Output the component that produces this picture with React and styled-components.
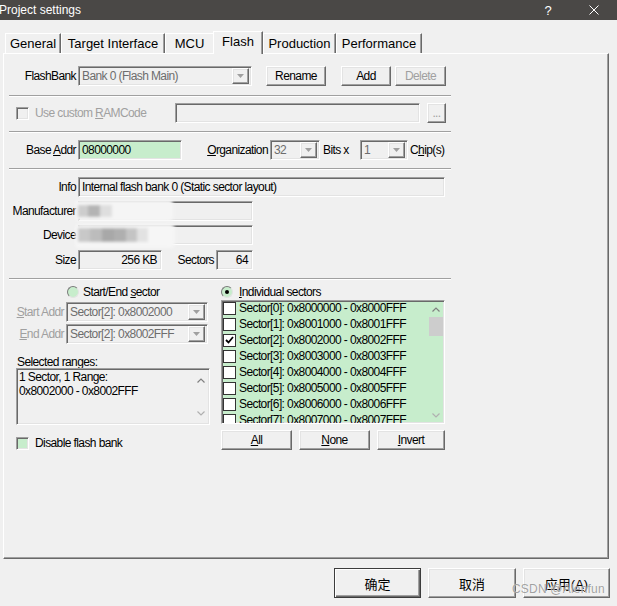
import React from 'react';
import styled, { createGlobalStyle, css } from 'styled-components';

const GREEN = '#c7edcc';
const FACE = '#f0f0f0';
const UI = `"Liberation Sans", Arial, sans-serif`;
const WIDE = `"Liberation Sans", Arial, sans-serif`;
const CJK = `"Liberation Sans", "Noto Sans CJK SC", sans-serif`;

const GlobalStyle = createGlobalStyle`
  * { box-sizing: border-box; }
  html, body { margin: 0; padding: 0; background: ${FACE}; }
  body {
    font-family: ${UI};
    font-size: 12px;
    letter-spacing: -0.6px;
    color: #000;
    overflow: hidden;
  }
`;

const sunken = css`
  border: 1px solid;
  border-color: #a0a0a0 #ffffff #ffffff #a0a0a0;
  box-shadow: inset 1px 1px 0 #696969, inset -1px -1px 0 #e3e3e3;
`;

const raised = css`
  border: 1px solid;
  border-color: #ffffff #696969 #696969 #ffffff;
  box-shadow: inset -1px -1px 0 #a0a0a0, inset 1px 1px 0 #e3e3e3;
`;

const Window = styled.div`
  position: relative;
  width: 617px;
  height: 606px;
  display: flex;
  flex-direction: column;
  background: ${FACE};
`;

const TitleBar = styled.div`
  height: 20px;
  flex-shrink: 0;
  display: flex;
  align-items: center;
  background: #4a4846;
  color: #fff;
  font-family: ${WIDE};
  font-size: 12px;
  letter-spacing: 0;
`;

const Title = styled.div`
  flex: 1;
  margin-left: -1px;
`;

const TitleButton = styled.div`
  width: 46px;
  height: 20px;
  display: flex;
  align-items: center;
  justify-content: center;
  font-size: 13px;
`;

const TabStrip = styled.div`
  display: flex;
  align-items: flex-end;
  height: 23px;
  margin: 11px 0 -1px;
  padding-left: 5px;
  position: relative;
  z-index: 1;
`;

const Tab = styled.div`
  width: ${p => p.$w}px;
  height: ${p => (p.$active ? 23 : 20)}px;
  margin-bottom: ${p => (p.$active ? 0 : 1)}px;
  padding-bottom: ${p => (p.$active ? 4 : 0)}px;
  display: flex;
  align-items: center;
  justify-content: center;
  background: ${FACE};
  border-top: 1px solid #fff;
  border-left: 1px solid #fff;
  border-right: ${p => (p.$hideRight ? 'none' : '1px solid #696969')};
  box-shadow: ${p => (p.$hideRight ? 'none' : 'inset -1px 0 0 #a0a0a0')};
  font-family: ${WIDE};
  font-size: 13px;
  letter-spacing: 0;
  white-space: nowrap;
`;

const Panel = styled.div`
  position: relative;
  width: 606px;
  height: 506px;
  flex-shrink: 0;
  margin-left: 3px;
  padding: 12px 0 0 5px;
  border: 1px solid;
  border-color: #fff #696969 #696969 #fff;
  box-shadow: inset -1px -1px 0 #a0a0a0;
`;

const Section = styled.div`
  width: 442px;
`;

const Row = styled.div`
  display: flex;
  align-items: center;
  height: 20px;
  margin-top: ${p => p.$mt || 0}px;
  padding-right: ${p => p.$pr || 0}px;
  white-space: nowrap;
`;

const Separator = styled.div`
  height: 2px;
  margin-top: ${p => p.$mt || 0}px;
  border-top: 1px solid #a0a0a0;
  border-bottom: 1px solid #fff;
`;

const Label = styled.span`
  flex-shrink: 0;
  width: ${p => (p.$w ?? 69)}px;
  padding: 0 2px 0 ${p => p.$pl || 0}px;
  text-align: ${p => (p.$left ? 'left' : 'right')};
  white-space: nowrap;
  color: ${p => (p.$dim ? '#a0a0a0' : '#000')};
`;

const Text = styled.span`
  margin-left: ${p => p.$ml || 0}px;
  color: ${p => (p.$dim ? '#a0a0a0' : '#000')};
  white-space: nowrap;
`;

const Field = styled.div`
  ${sunken};
  flex-shrink: 0;
  width: ${p => p.$w}px;
  height: 20px;
  margin-left: ${p => (p.$auto ? 'auto' : `${p.$ml || 0}px`)};
  display: flex;
  align-items: center;
  justify-content: ${p => (p.$right ? 'flex-end' : 'flex-start')};
  padding: 0 ${p => (p.$right ? 4 : 2)}px 0 3px;
  background: ${p => p.$bg || FACE};
  white-space: nowrap;
  overflow: hidden;
`;

const ComboText = styled.span`
  flex: 1;
  color: #6d6d6d;
  overflow: hidden;
  white-space: nowrap;
`;

const DropButton = styled.span`
  ${raised};
  flex-shrink: 0;
  width: 17px;
  height: 16px;
  display: flex;
  align-items: center;
  justify-content: center;
  background: ${FACE};
`;

const Button = styled.button`
  ${raised};
  flex-shrink: 0;
  width: ${p => p.$w}px;
  height: 20px;
  margin-left: ${p => p.$ml || 0}px;
  padding: 0;
  background: ${FACE};
  font-family: ${UI};
  font-size: 12px;
  letter-spacing: -0.6px;
  color: #000;
  &:disabled {
    color: #a0a0a0;
  }
`;

const Check = styled.span`
  flex-shrink: 0;
  width: 13px;
  height: 13px;
  margin-left: ${p => p.$ml || 0}px;
  display: flex;
  align-items: center;
  justify-content: center;
  ${p =>
    p.$flat
      ? css`
          border: 1px solid #333;
          background: #fff;
        `
      : css`
          ${sunken};
          background: ${p.$bg};
        `}
`;

const Radio = styled.span`
  flex-shrink: 0;
  width: 12px;
  height: 12px;
  border-radius: 50%;
  border: 1px solid;
  border-color: #7a7a7a #e3e3e3 #e3e3e3 #7a7a7a;
  background: ${GREEN};
  display: flex;
  align-items: center;
  justify-content: center;
  &::after {
    content: '';
    width: 4px;
    height: 4px;
    border-radius: 50%;
    background: ${p => (p.$on ? '#000' : 'transparent')};
  }
`;

const Lower = styled.div`
  display: flex;
  margin-left: 7px;
`;

const Column = styled.div`
  display: flex;
  flex-direction: column;
  width: ${p => p.$w}px;
  margin-left: ${p => p.$ml || 0}px;
`;

const OptionRow = styled.div`
  display: flex;
  align-items: center;
  height: 14px;
  margin-top: ${p => p.$mt || 0}px;
  padding-left: ${p => p.$pl || 0}px;
  gap: ${p => p.$gap || 4}px;
  white-space: nowrap;
`;

const Caption = styled.div`
  margin-top: 11px;
  padding-left: 1px;
  line-height: 14px;
`;

const TextBox = styled.div`
  ${sunken};
  height: 57px;
  margin-top: -1px;
  display: flex;
  background: ${FACE};
`;

const TextLines = styled.div`
  flex: 1;
  padding: 1px 2px;
  line-height: 14px;
  white-space: pre;
`;

const ScrollCol = styled.div`
  width: 17px;
  display: flex;
  flex-direction: column;
  align-items: center;
  justify-content: space-between;
  padding: 9px 0 8px;
`;

const List = styled.div`
  ${sunken};
  height: 124px;
  margin-top: 1px;
  display: flex;
  background: ${GREEN};
  overflow: hidden;
`;

const Items = styled.div`
  flex: 1;
  margin-top: -1px;
  padding-left: 1px;
`;

const Item = styled.div`
  display: flex;
  align-items: center;
  height: 16px;
  gap: 3px;
  white-space: nowrap;
`;

const ScrollTrack = styled.div`
  width: 17px;
  display: flex;
  flex-direction: column;
  align-items: center;
`;

const ArrowCell = styled.div`
  height: 16px;
  display: flex;
  align-items: center;
  justify-content: center;
`;

const Thumb = styled.div`
  width: 14px;
  height: 19px;
  background: #cdcdcd;
`;

const TrackGap = styled.div`
  flex: 1;
`;

const ButtonRow = styled.div`
  display: flex;
  gap: 7px;
  margin-top: 6px;
`;

const Footer = styled.div`
  display: flex;
  justify-content: flex-end;
  gap: 7px;
  margin-top: 9px;
  padding-right: 7px;
`;

const DialogButton = styled.button`
  ${raised};
  width: ${p => p.$w}px;
  height: 30px;
  padding: 0;
  background: ${FACE};
  font-family: ${CJK};
  font-size: 13px;
  color: #000;
  ${p =>
    p.$default &&
    css`
      border-color: #3c3c3c;
      box-shadow: inset 1px 1px 0 #fff, inset -1px -1px 0 #696969, inset -2px -2px 0 #a0a0a0;
    `}
`;

const Blur = styled.svg`
  position: absolute;
  left: 70px;
  top: 144px;
  pointer-events: none;
`;

const Watermark = styled.div`
  position: absolute;
  left: 512px;
  top: 582px;
  font-family: ${WIDE};
  font-size: 12px;
  letter-spacing: 0.2px;
  color: rgba(130, 130, 130, 0.75);
  text-shadow: 0 0 1px #fff;
  pointer-events: none;
`;

const tabs = [
  { label: 'General', w: 56 },
  { label: 'Target Interface', w: 104 },
  { label: 'MCU', w: 48 },
  { label: 'Flash', w: 50, active: true },
  { label: 'Production', w: 73 },
  { label: 'Performance', w: 86 },
];

const sectors = Array.from({ length: 8 }, (_, i) => {
  const base = (0x8000 + i).toString(16).toUpperCase();
  return `Sector[${i}]: 0x${base}000 - 0x${base}FFF`;
});

const DownTriangle = () => (
  <svg width="7" height="4" viewBox="0 0 7 4">
    <path d="M0 0h7L3.5 4z" fill="#a0a0a0" />
  </svg>
);

const Chevron = ({ up }) => (
  <svg width="8" height="5" viewBox="0 0 8 5">
    <path
      d={up ? 'M0.5 4.5L4 1L7.5 4.5' : 'M0.5 0.5L4 4L7.5 0.5'}
      fill="none"
      stroke={up ? '#808080' : '#b0b0b0'}
      strokeWidth="1.2"
    />
  </svg>
);

const Combo = ({ w, children }) => (
  <Field $w={w}>
    <ComboText>{children}</ComboText>
    <DropButton>
      <DownTriangle />
    </DropButton>
  </Field>
);

const CheckMark = () => (
  <svg width="9" height="8" viewBox="0 0 9 8">
    <path d="M1 4l2.5 2.5L8 1" fill="none" stroke="#000" strokeWidth="1.8" />
  </svg>
);

export default function App() {
  return (
    <>
      <GlobalStyle />
      <Window>
        <TitleBar>
          <Title>Project settings</Title>
          <TitleButton>?</TitleButton>
          <TitleButton>
            <svg width="10" height="10" viewBox="0 0 10 10">
              <path d="M0.5 0.5L9.5 9.5M9.5 0.5L0.5 9.5" stroke="#fff" strokeWidth="1" />
            </svg>
          </TitleButton>
        </TitleBar>

        <TabStrip>
          {tabs.map((t, i) => (
            <Tab key={t.label} $w={t.w} $active={t.active} $hideRight={tabs[i + 1] && tabs[i + 1].active}>
              {t.label}
            </Tab>
          ))}
        </TabStrip>

        <Panel>
          <Section>
            <Row>
              <Label>FlashBank</Label>
              <Combo w={174}>Bank 0 (Flash Main)</Combo>
              <Button $w={60} $ml={14}>Rename</Button>
              <Button $w={50} $ml={15}>Add</Button>
              <Button $w={51} $ml={4} disabled>Delete</Button>
            </Row>
            <Separator $mt={9} />
            <Row $mt={6} $pr={5}>
              <Check $ml={7} $bg={FACE} />
              <Text $ml={6} $dim>
                Use custom <u>R</u>AMCode
              </Text>
              <Field $w={245} $auto />
              <Button $w={19} $ml={7} disabled>...</Button>
            </Row>
            <Separator $mt={8} />
            <Row $mt={7}>
              <Label>
                Base <u>A</u>ddr
              </Label>
              <Field $w={104} $bg={GREEN}>08000000</Field>
              <Label $w={88}>
                <u>O</u>rganization
              </Label>
              <Combo w={50}>32</Combo>
              <Label $w={40} $left $pl={3}>Bits x</Label>
              <Combo w={48}>1</Combo>
              <Text $ml={2}>
                C<u>h</u>ip(s)
              </Text>
            </Row>
            <Separator $mt={8} />
            <Row $mt={7}>
              <Label>Info</Label>
              <Field $w={367}>Internal flash bank 0 (Static sector layout)</Field>
            </Row>
            <Row $mt={4}>
              <Label>Manufacturer</Label>
              <Field $w={175} />
            </Row>
            <Row $mt={4}>
              <Label>Device</Label>
              <Field $w={175} />
            </Row>
            <Row $mt={5}>
              <Label>Size</Label>
              <Field $w={84} $right>256 KB</Field>
              <Label $w={54}>Sectors</Label>
              <Field $w={37} $right>64</Field>
            </Row>
            <Separator $mt={8} />
          </Section>

          <Lower>
            <Column $w={194}>
              <OptionRow $mt={5} $pl={51}>
                <Radio />
                <span>
                  Start/End <u>s</u>ector
                </span>
              </OptionRow>
              <Row $mt={3}>
                <Label $w={50} $dim>
                  <u>S</u>tart Addr
                </Label>
                <Combo w={142}>Sector[2]: 0x8002000</Combo>
              </Row>
              <Row $mt={2}>
                <Label $w={50} $dim>
                  <u>E</u>nd Addr
                </Label>
                <Combo w={142}>Sector[2]: 0x8002FFF</Combo>
              </Row>
              <Caption>Selected ranges:</Caption>
              <TextBox>
                <TextLines>{'1 Sector, 1 Range:\n0x8002000 - 0x8002FFF'}</TextLines>
                <ScrollCol>
                  <Chevron up />
                  <Chevron />
                </ScrollCol>
              </TextBox>
              <OptionRow $mt={11} $gap={6}>
                <Check $bg={GREEN} />
                <span>Disable flash bank</span>
              </OptionRow>
            </Column>

            <Column $w={224} $ml={11}>
              <OptionRow $mt={5} $gap={6}>
                <Radio $on />
                <span>
                  <u>I</u>ndividual sectors
                </span>
              </OptionRow>
              <List>
                <Items>
                  {sectors.map((s, i) => (
                    <Item key={s}>
                      <Check $flat>{i === 2 && <CheckMark />}</Check>
                      <span>{s}</span>
                    </Item>
                  ))}
                </Items>
                <ScrollTrack>
                  <ArrowCell>
                    <Chevron up />
                  </ArrowCell>
                  <Thumb />
                  <TrackGap />
                  <ArrowCell>
                    <Chevron />
                  </ArrowCell>
                </ScrollTrack>
              </List>
              <ButtonRow>
                <Button $w={71}>
                  <u>A</u>ll
                </Button>
                <Button $w={71}>
                  <u>N</u>one
                </Button>
                <Button $w={68}>
                  <u>I</u>nvert
                </Button>
              </ButtonRow>
            </Column>
          </Lower>

          <Blur width="110" height="52" viewBox="0 0 110 52">
            <defs>
              <filter id="pix" x="-10%" y="-20%" width="120%" height="140%">
                <feGaussianBlur stdDeviation="1.4" />
              </filter>
            </defs>
            <g filter="url(#pix)">
              <rect x="1" y="2" width="98" height="21" rx="4" fill="#f5f5f5" />
              <rect x="4" y="7" width="10" height="12" fill="#cdcdcd" />
              <rect x="14" y="7" width="12" height="12" fill="#b4b4b4" />
              <rect x="26" y="7" width="12" height="12" fill="#dedede" />
              <rect x="1" y="26" width="100" height="24" rx="5" fill="#f6f6f6" />
              <rect x="4" y="30" width="12" height="14" fill="#c8c8c8" />
              <rect x="16" y="30" width="12" height="14" fill="#bcbcbc" />
              <rect x="28" y="30" width="12" height="14" fill="#a8a8a8" />
              <rect x="40" y="30" width="12" height="14" fill="#afafaf" />
              <rect x="52" y="30" width="11" height="14" fill="#c4c4c4" />
              <rect x="63" y="30" width="11" height="14" fill="#e2e2e2" />
            </g>
          </Blur>
        </Panel>

        <Footer>
          <DialogButton $w={87} $default>确定</DialogButton>
          <DialogButton $w={88}>取消</DialogButton>
          <DialogButton $w={87}>
            应用(<u>A</u>)
          </DialogButton>
        </Footer>

        <Watermark>CSDN @Alenfun</Watermark>
      </Window>
    </>
  );
}
